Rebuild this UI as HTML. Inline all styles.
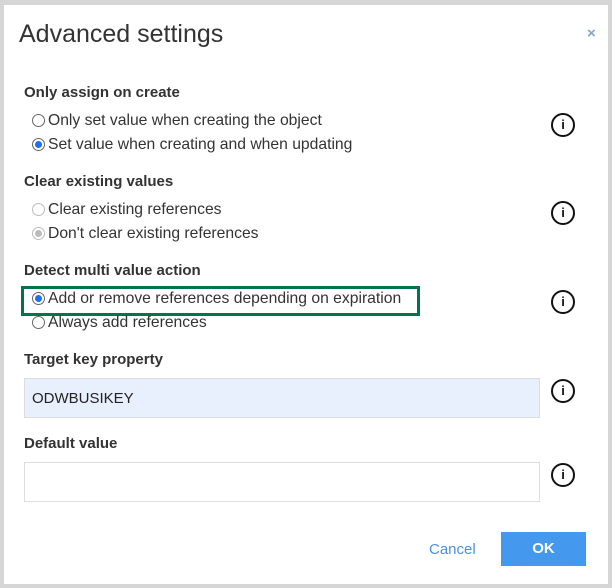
<!DOCTYPE html>
<html><head><style>
body{margin:0;width:612px;height:588px;background:#d6d6d6;position:relative;overflow:hidden;font-family:"Liberation Sans",sans-serif;color:#222}
.dlg{position:absolute;left:4px;top:5px;width:604px;height:579px;background:#fff}
.a{position:absolute;white-space:nowrap}
.h{font-size:15px;font-weight:bold;color:#333}
.r{font-size:15.7px;color:#333;left:48px}
.rad{position:absolute;left:32px;width:11px;height:11px;border:1px solid #666;border-radius:50%;background:#fff}
.rad.on::after{content:"";position:absolute;left:2px;top:2px;width:7px;height:7px;border-radius:50%;background:#1a73e8}
.rad.dis{border-color:#bbb}
.rad.dis.on::after{background:#bbb}
.info{position:absolute;left:551px;width:20px;height:20px;border:2px solid #111;border-radius:50%;font:bold 13px "Liberation Sans",sans-serif;text-align:center;line-height:20px;color:#111}
.inp{position:absolute;left:24px;width:514px;height:38px;border:1px solid #ddd}
</style></head><body>
<div class="dlg"></div>
<div class="a" style="left:19px;top:20px;font-size:25px;color:#333;font-weight:300">Advanced settings</div>
<div class="a" style="left:587px;top:25px;font-size:15px;color:#7fa6cf;font-weight:bold">×</div>

<div class="a h" style="left:24px;top:84px">Only assign on create</div>
<div class="rad" style="top:114px"></div><div class="a r" style="top:112px">Only set value when creating the object</div>
<div class="rad on" style="top:138px"></div><div class="a r" style="top:136px">Set value when creating and when updating</div>
<div class="info" style="top:113px">i</div>

<div class="a h" style="left:24px;top:173px">Clear existing values</div>
<div class="rad dis" style="top:203px"></div><div class="a r" style="top:201px">Clear existing references</div>
<div class="rad dis on" style="top:227px"></div><div class="a r" style="top:225px">Don't clear existing references</div>
<div class="info" style="top:201px">i</div>

<div class="a h" style="left:24px;top:262px">Detect multi value action</div>
<div style="position:absolute;left:21px;top:286px;width:393px;height:24px;border:3px solid #00754a"></div>
<div class="rad on" style="top:292px"></div><div class="a r" style="top:290px">Add or remove references depending on expiration</div>
<div class="rad" style="top:316px"></div><div class="a r" style="top:314px">Always add references</div>
<div class="info" style="top:290px">i</div>

<div class="a h" style="left:24px;top:351px">Target key property</div>
<div class="inp" style="top:378px;background:#e8f0fe"></div>
<div class="a" style="left:32px;top:390px;font-size:15px;color:#222">ODWBUSIKEY</div>
<div class="info" style="top:379px">i</div>

<div class="a h" style="left:24px;top:435px">Default value</div>
<div class="inp" style="top:462px"></div>
<div class="info" style="top:463px">i</div>

<div class="a" style="left:429px;top:541px;font-size:15px;color:#4a90e2">Cancel</div>
<div style="position:absolute;left:501px;top:532px;width:85px;height:34px;background:#4499ee;color:#fff;font-weight:bold;font-size:15px;text-align:center;line-height:34px">OK</div>
</body></html>
